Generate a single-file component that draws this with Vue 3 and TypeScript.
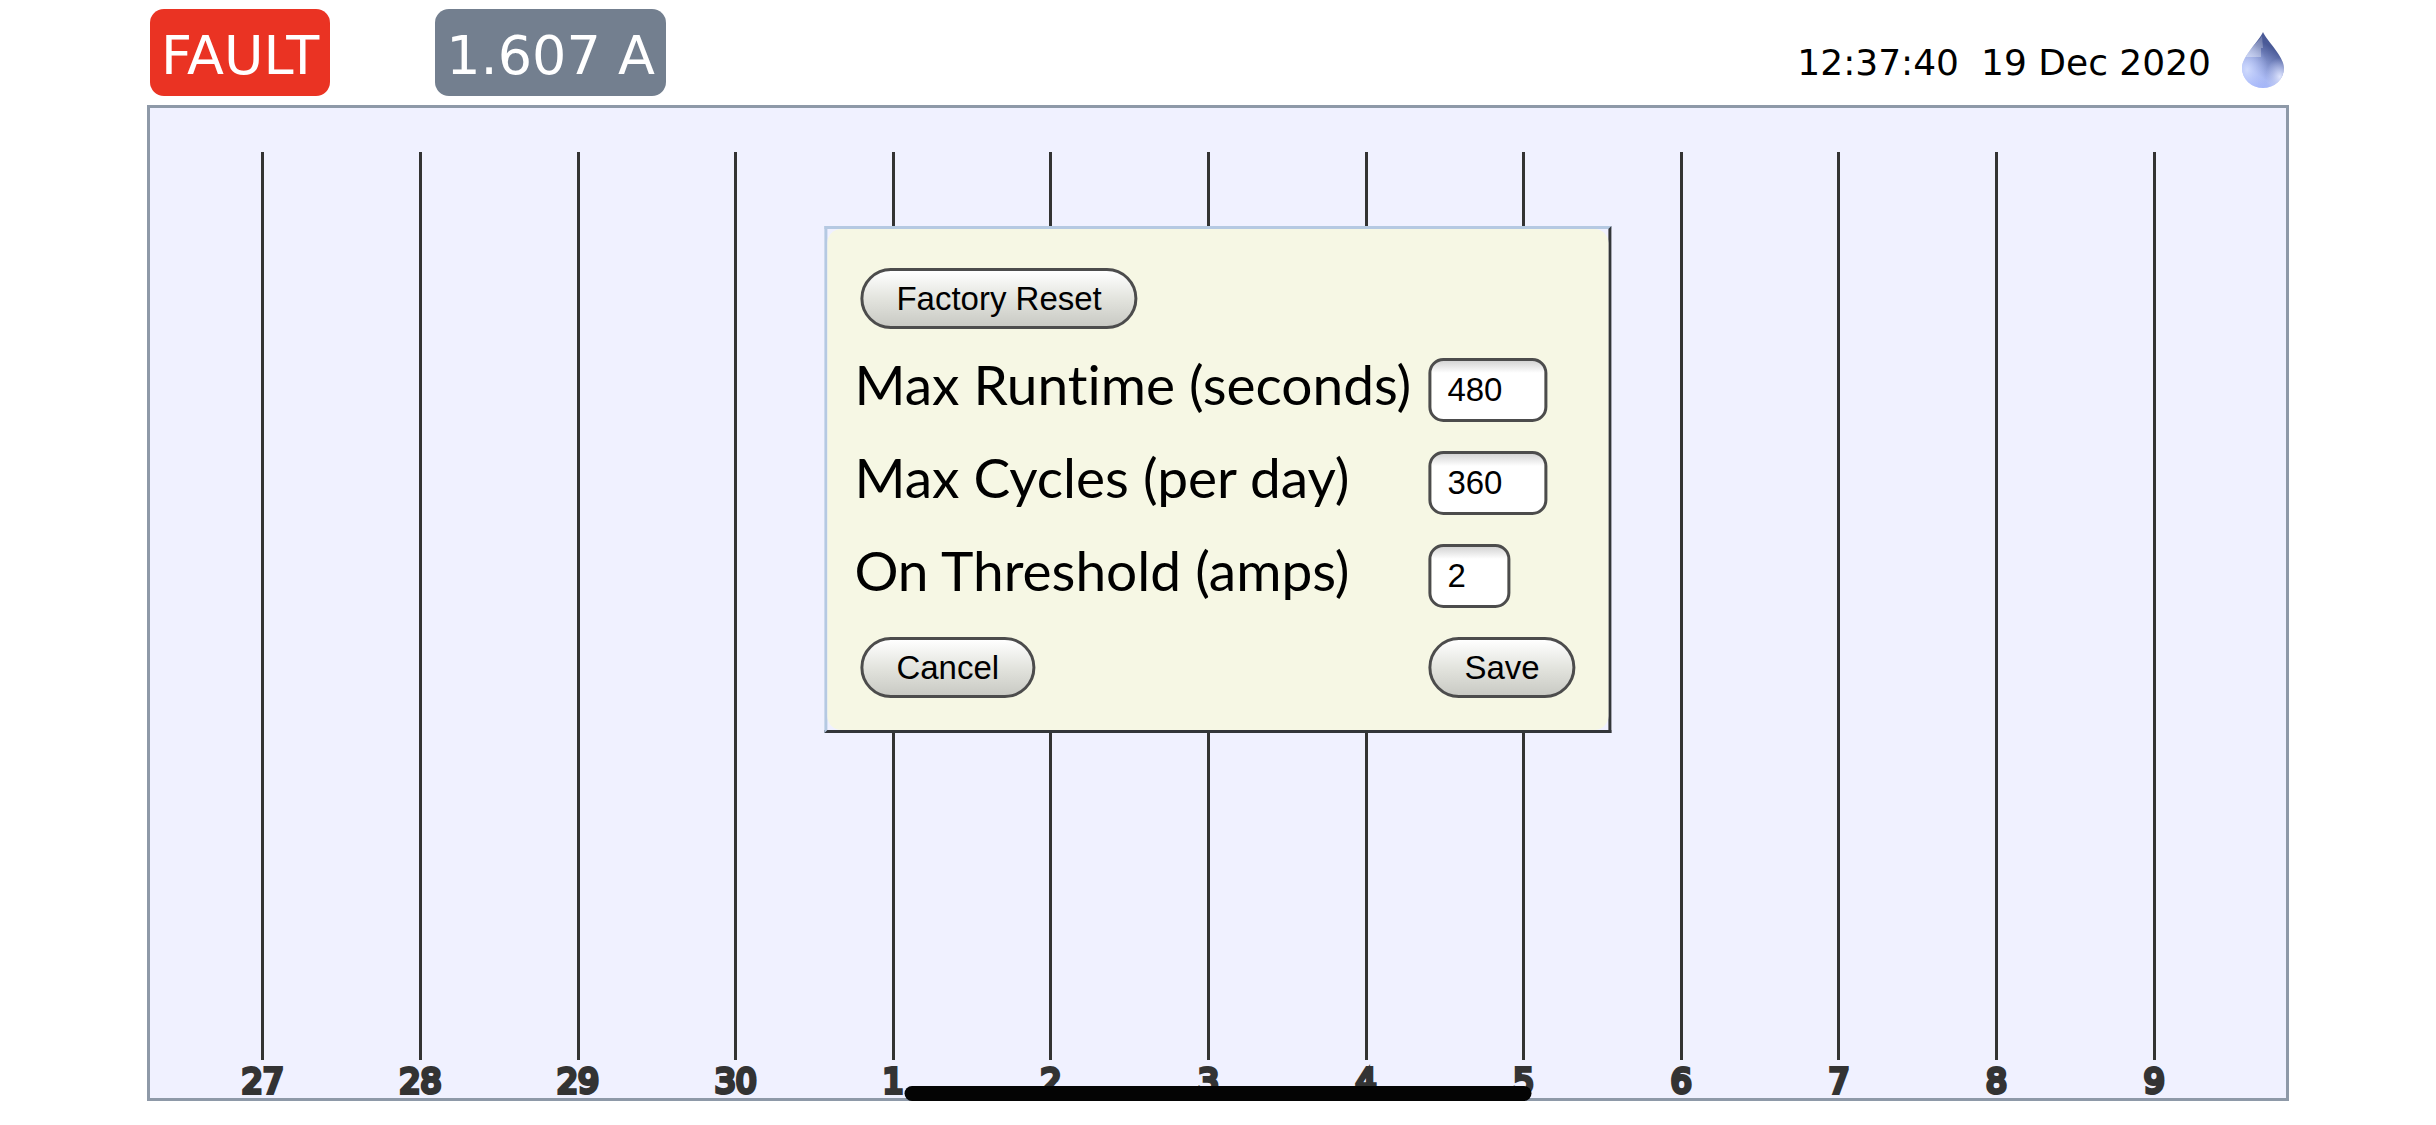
<script setup lang="ts">
import { ref } from 'vue'

interface Setting {
  id: string
  label: string
  value: string
  short?: boolean
}

const days: number[] = [27, 28, 29, 30, 1, 2, 3, 4, 5, 6, 7, 8, 9]

const settings = ref<Setting[]>([
  { id: 'max-runtime', label: 'Max Runtime (seconds)', value: '480' },
  { id: 'max-cycles', label: 'Max Cycles (per day)', value: '360' },
  { id: 'on-threshold', label: 'On Threshold (amps)', value: '2', short: true },
])
</script>

<template>
  <div class="page">
    <header class="bar">
      <span class="badge fault">FAULT</span>
      <span class="badge current">1.607 A</span>
      <time class="clock">
        <span>12:37:40</span>
        <span>19 Dec 2020</span>
      </time>
      <svg class="drop" viewBox="0 0 42 56" role="img" aria-label="Water">
        <defs>
          <linearGradient id="drop-body" x1="0.75" y1="0.3" x2="0.4" y2="1">
            <stop offset="0" stop-color="#4a5a97" />
            <stop offset="0.35" stop-color="#7c8cc6" />
            <stop offset="0.75" stop-color="#a9b9f4" />
            <stop offset="1" stop-color="#a3b5fb" />
          </linearGradient>
          <radialGradient id="drop-left" cx="0.12" cy="0.68" r="0.5">
            <stop offset="0" stop-color="#cfdafd" />
            <stop offset="1" stop-color="#b4c2f6" stop-opacity="0" />
          </radialGradient>
          <radialGradient id="drop-glow" cx="0.9" cy="0.8" r="0.34">
            <stop offset="0" stop-color="#dfe5fd" />
            <stop offset="1" stop-color="#c5cff8" stop-opacity="0" />
          </radialGradient>
          <linearGradient id="drop-shine" x1="1" y1="0" x2="0" y2="1">
            <stop offset="0" stop-color="#ffffff" stop-opacity="0.2" />
            <stop offset="1" stop-color="#ffffff" stop-opacity="0.4" />
          </linearGradient>
        </defs>
        <path d="M21 0C24 8 42 24 42 36A21 20 0 0 1 0 36C0 24 18 8 21 0Z" fill="url(#drop-body)" />
        <path d="M21 0C24 8 42 24 42 36A21 20 0 0 1 0 36C0 24 18 8 21 0Z" fill="url(#drop-left)" />
        <path d="M21 0C24 8 42 24 42 36A21 20 0 0 1 0 36C0 24 18 8 21 0Z" fill="url(#drop-glow)" />
        <path d="M20 4L21 16H19V25H4C7 17 17 9 20 4Z" fill="url(#drop-shine)" />
      </svg>
    </header>

    <main class="chart">
      <div class="days">
        <div v-for="day in days" :key="day" class="day">
          <i class="rule"></i>
          <span class="number">{{ day }}</span>
        </div>
      </div>

      <section class="dialog" role="dialog" aria-label="Settings">
        <form class="form" @submit.prevent>
          <button type="button" class="button indent wide">Factory Reset</button>
          <template v-for="item in settings" :key="item.id">
            <label class="label" :for="item.id">{{ item.label }}</label>
            <input :id="item.id" v-model="item.value" class="field" :class="{ short: item.short }" type="text" />
          </template>
          <button type="button" class="button indent">Cancel</button>
          <button type="submit" class="button">Save</button>
        </form>
      </section>

      <div class="home"></div>
    </main>
  </div>
</template>

<style>
body {
  margin: 0;
  background: #fff;
}
</style>

<style scoped>
.page {
  box-sizing: border-box;
  min-height: 100vh;
  padding: 9px 147px 24px;
  display: flex;
  flex-direction: column;
  gap: 9px;
  font-family: Verdana, "DejaVu Sans", sans-serif;
}

.bar {
  display: flex;
  align-items: flex-start;
  padding: 0 5px 0 3px;
}

.badge {
  padding: 6px 11px 0;
  border-radius: 14px;
  color: #fff;
  font-size: 54px;
  line-height: 81px;
  text-align: center;
}

.fault {
  background: #ea3323;
}

.current {
  margin-left: 105px;
  background: #737f8f;
}

.clock {
  display: flex;
  gap: 22px;
  margin-left: auto;
  padding-top: 33px;
  font-size: 36px;
  line-height: 42px;
  color: #000;
}

.drop {
  width: 42px;
  height: 56px;
  margin: 23px 0 0 31px;
}

.chart {
  position: relative;
  flex: 1;
  display: flex;
  box-sizing: border-box;
  border: 3px solid #8e99a8;
  background: #f0f1ff;
}

.days {
  flex: 1;
  display: grid;
  grid-template-columns: repeat(13, 1fr);
  padding: 44px 53px 0 34px;
}

.day {
  display: flex;
  flex-direction: column;
  align-items: center;
}

.rule {
  flex: 1;
  width: 3px;
  background: #333;
}

.number {
  padding-top: 6px;
  color: #333;
  font-size: 33px;
  line-height: 32px;
  -webkit-text-stroke: 4px #333;
}

.dialog {
  position: absolute;
  top: 118px;
  left: 50%;
  transform: translateX(-50%);
  border: 3px solid;
  border-color: #b5c9e2 #333639 #333639 #b5c9e2;
  background: #f0f1ff;
}

.form {
  display: grid;
  grid-template-columns: 574px auto;
  row-gap: 29px;
  justify-items: start;
  align-items: start;
  padding: 39px 33px 32px 27px;
  border-radius: 14px;
  background: #f6f7e4;
}

.label {
  font-family: "Avenir Next", Lato, sans-serif;
  font-size: 55px;
  line-height: 52px;
  font-variant-ligatures: none;
  color: #000;
  white-space: nowrap;
}

.button {
  box-sizing: border-box;
  height: 61px;
  padding: 0 33px;
  border: 3px solid #4c4c4c;
  border-radius: 31px;
  background: linear-gradient(#fff, #e3e4de 50%, #c9cac4);
  color: #000;
  font-family: Helvetica, "Liberation Sans", sans-serif;
  font-size: 33px;
}

.indent {
  margin-left: 6px;
}

.wide {
  grid-column: 1 / -1;
}

.field {
  box-sizing: border-box;
  width: 119px;
  height: 64px;
  padding: 0 16px;
  border: 3px solid #4c4c4c;
  border-radius: 15px;
  background: linear-gradient(#d4d4d4, #fff 12px);
  color: #000;
  font-family: Helvetica, "Liberation Sans", sans-serif;
  font-size: 33px;
}

.short {
  width: 82px;
}

.home {
  position: absolute;
  bottom: -3px;
  left: 50%;
  width: 627px;
  height: 15px;
  transform: translateX(-50%);
  border-radius: 8px;
  background: #040404;
}
</style>
